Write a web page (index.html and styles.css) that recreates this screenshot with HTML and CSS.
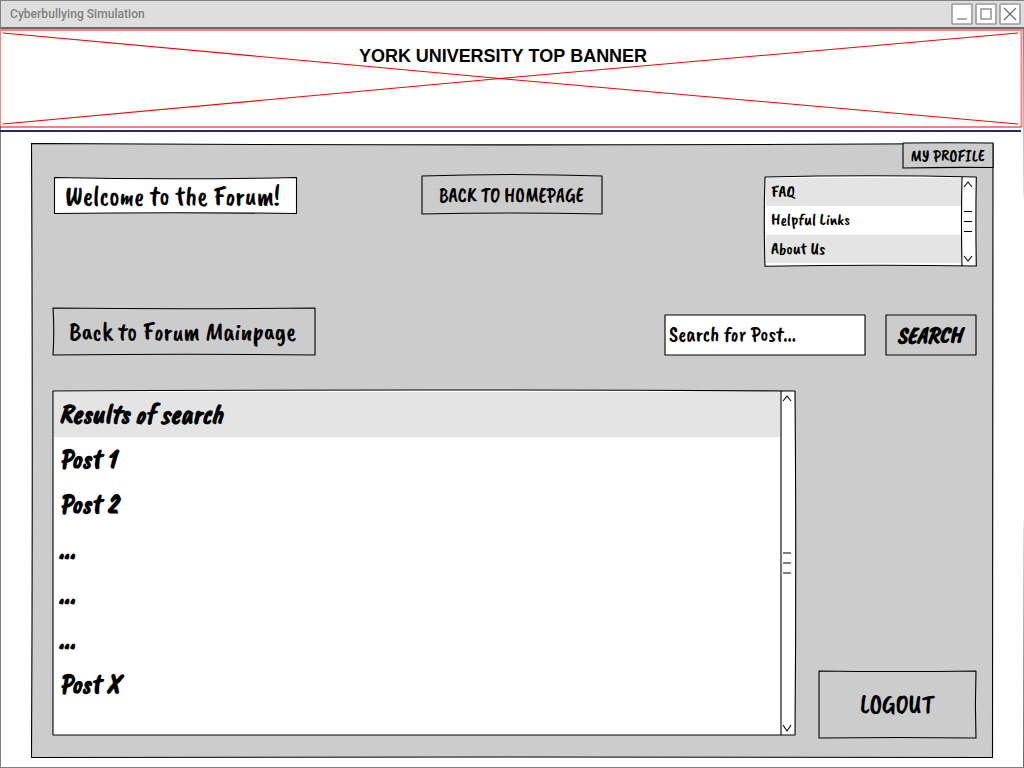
FILE: index.html
```html
<!DOCTYPE html>
<html lang="en">
<head>
<meta charset="utf-8">
<title>Cyberbullying Simulation</title>
<link rel="stylesheet" href="styles.css">
</head>
<body>
<div class="window">
  <header class="titlebar">
    <h1 class="title">Cyberbullying Simulation</h1>
    <div class="controls">
      <svg class="control" viewBox="0 0 22 22"><rect x="1" y="1" width="20" height="20" rx="1"/><path d="M6 19H16"/></svg>
      <svg class="control" viewBox="0 0 22 22"><rect x="1" y="1" width="20" height="20" rx="1"/><rect x="6" y="6" width="10" height="10"/></svg>
      <svg class="control" viewBox="0 0 22 22"><rect x="1" y="1" width="20" height="20" rx="1"/><path class="thin" d="M5 5L17 17M5 17L17 5"/></svg>
    </div>
  </header>

  <section class="banner">
    <svg class="banner-art" viewBox="0 29 1024 103">
      <path class="red edge" d="M0 126V30H1021.500V127"/>
      <path class="red" d="M0 127Q500 125.600 1021.500 127M3 33L500 78.500L1018 124M3 124L500 78.500L1018 33"/>
      <path class="navy" d="M0 131H1021"/>
      <text class="banner-text" x="359" y="62" textLength="288">YORK UNIVERSITY TOP BANNER</text>
    </svg>
  </section>

  <main class="panel">
    <svg class="outline" viewBox="31 143 963 616"><path class="grey ink" d="M31.500 143.500Q512 146.300 993 143.500Q993.800 450 992.500 757.500Q512 756.500 31.500 757.500Q33 450 31.500 143.500Z"/></svg>

    <div class="profile-row">
      <svg class="sketch profile" viewBox="902 142 92 27">
        <path class="grey ink" d="M903 143Q948 142.600 993 143V167.500Q948 167 903 168Z"/>
        <text class="hand" font-size="17" x="910.500" y="161" textLength="74" lengthAdjust="spacingAndGlyphs">MY PROFILE</text>
      </svg>
    </div>

    <div class="nav-row">
      <svg class="sketch welcome" viewBox="53 176 245 39">
        <path class="white ink" d="M54.500 177.500Q175 180 296.500 177.500V213.500Q175 212 54.500 213.500Z"/>
        <text class="hand" font-size="28" x="65" y="205" textLength="215" lengthAdjust="spacingAndGlyphs">Welcome to the Forum!</text>
      </svg>
      <svg class="sketch home" viewBox="420 173 184 43">
        <path class="grey ink" d="M422 176Q512 173 602 176V214Q512 212 422 214Z"/>
        <text class="hand" font-size="21.500" x="439" y="202" textLength="144.500" lengthAdjust="spacingAndGlyphs">BACK TO HOMEPAGE</text>
      </svg>
      <svg class="sketch links" viewBox="763 174 215 94">
        <path class="white" d="M765 177Q870 174.500 976 177V266H765Z"/>
        <path class="stripe" d="M766 178H961V206H766ZM766 235H961V263H766Z"/>
        <path class="ink" d="M765 177Q870 174.500 976.300 177Q975.500 220 976.300 266Q870 264.500 765 266.300Q763.500 220 765 177ZM962 177Q961 220 962 266"/>
        <path class="ink" d="M964 187L968 182L972 187M964 256L968 261L972 256M964 211.500H972M964 221.500H972M964 231.500H972"/>
        <g class="hand" font-size="17">
          <text x="771" y="197">FAQ</text>
          <text x="771" y="225">Helpful Links</text>
          <text x="771" y="254">About Us</text>
        </g>
      </svg>
    </div>

    <div class="search-row">
      <svg class="sketch back" viewBox="52 306 265 51">
        <path class="grey ink" d="M53 308Q185 309.600 315 308V355Q185 353.500 53 355Q54.500 330 53 308Z"/>
        <text class="hand" font-size="26" x="69" y="340" textLength="227" lengthAdjust="spacingAndGlyphs">Back to Forum Mainpage</text>
      </svg>
      <svg class="sketch field" viewBox="663 313 204 44">
        <path class="white ink" d="M665 315H865V355H665Z"/>
        <text class="hand" font-size="22" x="669" y="341" textLength="127" lengthAdjust="spacingAndGlyphs">Search for Post...</text>
      </svg>
      <svg class="sketch search" viewBox="884 313 94 44">
        <path class="grey ink" d="M886 315H976V355H886Z"/>
        <text class="hand heavy" font-size="24" x="897" y="343" textLength="65" lengthAdjust="spacingAndGlyphs">SEARCH</text>
      </svg>
    </div>

    <div class="results-row">
      <svg class="sketch results" viewBox="51 388 746 349">
        <path class="white" d="M53 391Q425 389 795 391V735H53Z"/>
        <path class="stripe" d="M54 392H780V437H54Z"/>
        <path class="ink" d="M53 391Q425 389 795 391Q796.500 560 795 735H53ZM781 391V735"/>
        <path class="ink" d="M783 401L787 396L791 401M783 725L787 731L791 725M783 553H791M783 563H791M783 573H791"/>
        <g class="hand heavy" font-size="28">
          <text x="59" y="423" textLength="164" lengthAdjust="spacingAndGlyphs">Results of search</text>
          <text x="59" y="468" textLength="57" lengthAdjust="spacingAndGlyphs">Post 1</text>
          <text x="59" y="513" textLength="59" lengthAdjust="spacingAndGlyphs">Post 2</text>
          <text x="58.500" y="558">...</text>
          <text x="58.500" y="603">...</text>
          <text x="58.500" y="648">...</text>
          <text x="59" y="693" textLength="61" lengthAdjust="spacingAndGlyphs">Post X</text>
        </g>
      </svg>
      <svg class="sketch logout" viewBox="817 669 160 71">
        <path class="grey ink" d="M819 671Q898 672 976 671Q974.800 705 976 738Q898 737 819 738Z"/>
        <text class="hand" font-size="27" x="860" y="713" textLength="74" lengthAdjust="spacingAndGlyphs">LOGOUT</text>
      </svg>
    </div>
  </main>
</div>
</body>
</html>
```
FILE: styles.css
```css
* { box-sizing: border-box; }
body { margin: 0; background: #fff; overflow: hidden; }
svg { display: block; flex: none; fill: none; }
.window {
  width: 1024px;
  height: 768px;
  border: 1px solid #808080;
  border-right: 0;
  background: linear-gradient(#777, #ddd 190px, #fff 200px, #fff 515px, #ddd 530px, #666) right / 1px 100% no-repeat #fff;
}
.titlebar {
  display: flex;
  justify-content: space-between;
  align-items: center;
  height: 28px;
  padding: 0 3px 0 9px;
  background: #dedede;
  border-bottom: 2px solid #6c6a6a;
}
.title {
  margin: 0;
  font: 500 12px/26px Roboto, sans-serif;
  letter-spacing: 0.05px;
  color: #808080;
}
.controls { display: flex; gap: 2px; }
.control { width: 22px; height: 22px; stroke: #999; stroke-width: 1.6; }
.control rect { fill: #fff; }
.control path { transform: translateY(-3px); }
.control .thin { transform: none; stroke: #666; stroke-width: 1.1; }
.banner { height: 103px; margin-left: -1px; }
.banner-art { width: 1024px; height: 103px; }
.red { stroke: #f00; stroke-width: 1.1; }
.edge { stroke: #ff8080; stroke-width: 2; }
.navy { stroke: #202878; stroke-width: 2; }
.banner-text { font: 700 18px "Liberation Sans", Arial, sans-serif; font-kerning: none; fill: #000; }

.panel {
  display: flow-root;
  position: relative;
  width: 963px;
  height: 616px;
  margin: 11px 0 0 30px;
}
.outline { position: absolute; inset: 0; width: 963px; height: 616px; }
.sketch { position: relative; overflow: visible; }
.profile-row { display: flex; justify-content: flex-end; height: 26px; margin-top: -1px; }
.nav-row, .search-row, .results-row { display: flex; padding-left: 22px; }
.nav-row { height: 94px; margin-top: 6px; }
.search-row { height: 51px; margin-top: 38px; padding-left: 21px; }
.results-row { height: 352px; margin-top: 31px; padding-left: 20px; }

.profile { width: 92px; height: 27px; }
.welcome { width: 245px; height: 39px; margin-top: 2px; }
.home { width: 184px; height: 43px; margin: -1px 0 0 122px; }
.links { width: 215px; height: 94px; margin-left: 159px; }
.back { width: 265px; height: 51px; }
.field { width: 204px; height: 44px; margin: 7px 0 0 346px; }
.search { width: 94px; height: 44px; margin: 7px 0 0 17px; }
.results { width: 746px; height: 349px; }
.logout { width: 160px; height: 71px; margin-left: 20px; align-self: flex-end; }

.grey { fill: #ccc; }
.white { fill: #fff; }
.stripe { fill: #e4e4e4; }
.ink { stroke: #000; stroke-width: 1.1; stroke-linejoin: round; }
.hand { font-family: "Caveat Brush", Lato, sans-serif; font-weight: 400; fill: #000; }
.heavy { font-weight: 700; font-style: italic; }
```
